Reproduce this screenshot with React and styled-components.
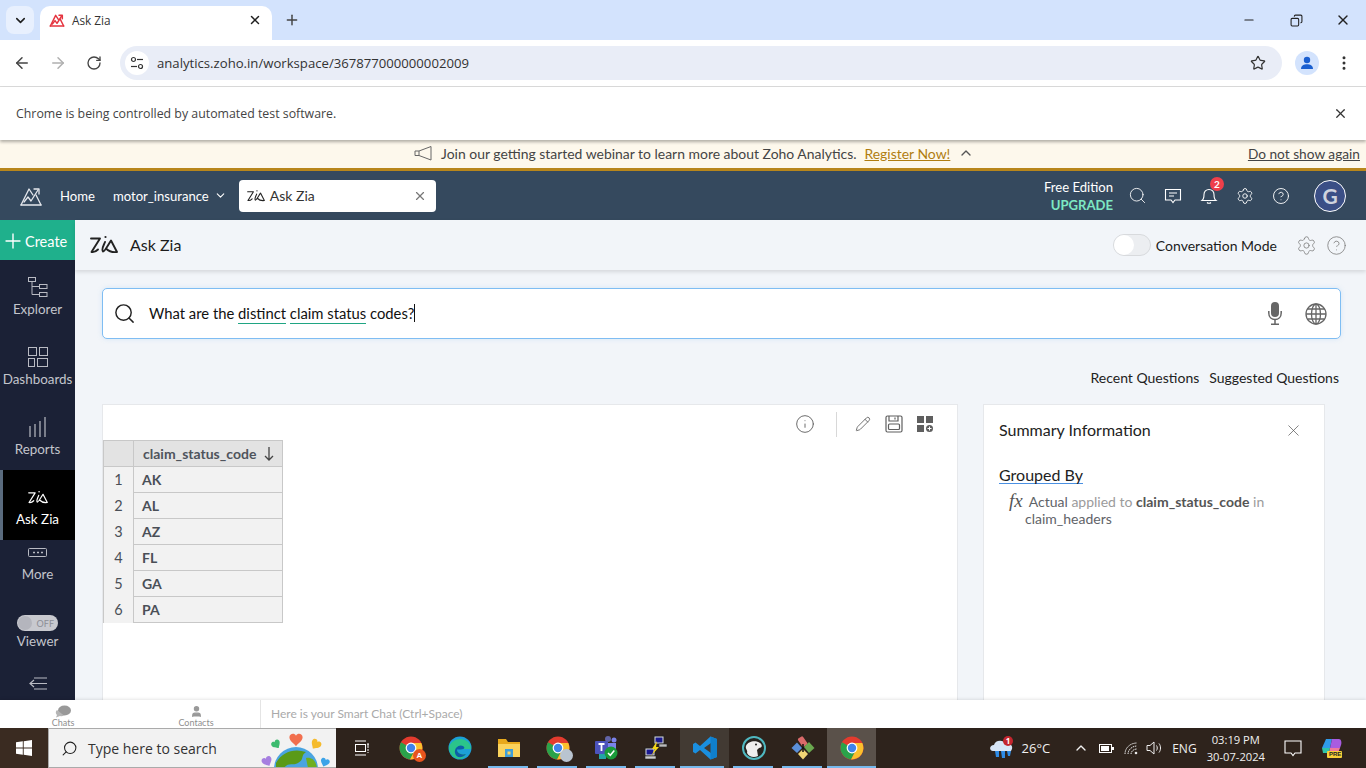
import React from 'react';
import styled, { createGlobalStyle } from 'styled-components';
import { ChevronDown, ChevronUp, X, Plus, ArrowLeft, ArrowRight, RotateCw, Star, MoreVertical, Search, Settings, CircleHelp, Info, Pencil, Minus, Copy, User } from 'lucide-react';

const GlobalStyle = createGlobalStyle`
  html, body { margin: 0; padding: 0; overflow: hidden; }
  * { box-sizing: border-box; }
  body { font-family: Lato, "Liberation Sans", sans-serif; }
`;

const Screen = styled.div`
  width: 1366px;
  height: 768px;
  display: flex;
  flex-direction: column;
  overflow: hidden;
  background: #fff;
`;

/* chrome */
const TabStrip = styled.div`
  height: 40px;
  flex: none;
  background: #d3e3fd;
  display: flex;
  align-items: flex-end;
  padding-left: 6px;
  color: #1f1f1f;
`;
const TabListBtn = styled.div`
  width: 28px;
  height: 28px;
  margin: 0 6px 6px 0;
  border-radius: 8px;
  background: #e8f0fe;
  display: flex;
  align-items: center;
  justify-content: center;
`;
const BrowserTab = styled.div`
  width: 232px;
  height: 34px;
  background: #fff;
  border-radius: 10px 10px 0 0;
  display: flex;
  align-items: center;
  padding: 0 10px 6px 9px;
  font: 11.8px "Open Sans", sans-serif;
  gap: 7px;
`;
const TabTitle = styled.span`
  flex: 1;
  color: #333;
`;
const NewTab = styled.div`
  width: 40px;
  height: 34px;
  padding-bottom: 6px;
  display: flex;
  align-items: center;
  justify-content: center;
  color: #444;
`;
const WindowBtns = styled.div`
  margin-left: auto;
  display: flex;
  height: 40px;
  align-items: center;
  gap: 33px;
  padding-right: 15px;
  color: #222;
`;
const RestoreIcon = styled(Copy)`
  transform: translateX(1px) scaleX(-1);
`;
const Toolbar = styled.div`
  height: 47px;
  flex: none;
  background: #fff;
  border-bottom: 1px solid #dcdcdc;
  display: flex;
  align-items: center;
  padding: 0 11px 1px 13px;
  color: #444;
`;
const NavIcons = styled.div`
  display: flex;
  gap: 18px;
  align-items: center;
  width: 107px;
`;
const ReloadIcon = styled(RotateCw)`
  margin-left: 1px;
`;
const Omnibox = styled.div`
  width: 1162px;
  height: 34px;
  border-radius: 17px;
  background: #e9edf7;
  display: flex;
  align-items: center;
  padding: 0 16px 0 5px;
  font: 13.15px "Open Sans", sans-serif;
  color: #333;
`;
const SiteBadge = styled.div`
  width: 24px;
  height: 24px;
  border-radius: 50%;
  background: #fff;
  display: flex;
  align-items: center;
  justify-content: center;
  margin-right: 8px;
`;
const UrlText = styled.span`
  flex: 1;
`;
const ProfileDot = styled.div`
  width: 24px;
  height: 24px;
  margin-left: 13px;
  border-radius: 50%;
  background: #d3e3fd;
  display: flex;
  align-items: center;
  justify-content: center;
`;
const MenuDots = styled.div`
  margin-left: 16px;
  display: flex;
  color: #333;
`;
const InfoBar = styled.div`
  height: 53px;
  flex: none;
  background: #fff;
  display: flex;
  align-items: center;
  justify-content: space-between;
  padding: 0 18px 0 16px;
  font: 12.35px "Open Sans", sans-serif;
  color: #444;
  box-shadow: 0 2px 3px rgba(0,0,0,.3);
  position: relative;
  z-index: 3;
`;

/* banner + nav */
const Banner = styled.div`
  height: 31px;
  flex: none;
  background: #fdf8ec;
  border-bottom: 3px solid #b8861b;
  display: flex;
  align-items: center;
  font-size: 13.95px;
  color: #444;
  padding: 0 6px 2px 414px;
`;
const BannerText = styled.span`
  margin-left: 8px;
`;
const RegisterLink = styled.a`
  margin: 0 8px 0 8px;
  color: #b07d10;
  text-decoration: underline;
`;
const DismissLink = styled.a`
  margin-left: auto;
  color: #444;
  text-decoration: underline;
  font-size: 13.7px;
`;
const TopNav = styled.div`
  height: 49px;
  flex: none;
  background: #35495e;
  display: flex;
  align-items: center;
  padding: 0 20px 0 19px;
  color: #fff;
  font-size: 13.1px;
`;
const NavLink = styled.span`
  margin-left: ${p => p.$ml || 0}px;
  display: flex;
  align-items: center;
  gap: 5px;
`;
const OpenTab = styled.div`
  margin-left: 12px;
  width: 197px;
  height: 32px;
  background: #fff;
  border-radius: 4px;
  color: #333;
  font-size: 14px;
  display: flex;
  align-items: center;
  padding: 0 9px 0 8px;
  gap: 5px;
`;
const OpenTabTitle = styled.span`
  flex: 1;
`;
const NavRight = styled.div`
  margin-left: auto;
  display: flex;
  align-items: center;
`;
const Edition = styled.div`
  text-align: right;
  line-height: 18px;
  font-size: 13.1px;
  margin-right: 6px;
`;
const Upgrade = styled.div`
  color: #7de8c3;
  font-weight: 700;
`;
const NavIcon = styled.div`
  width: 36px;
  height: 24px;
  display: flex;
  align-items: center;
  justify-content: center;
  position: relative;
  color: #fff;
`;
const NotifBadge = styled.span`
  position: absolute;
  top: -7px;
  left: 19px;
  width: 14px;
  height: 14px;
  border-radius: 50%;
  background: #ef3f4a;
  font-size: 10px;
  font-weight: 700;
  line-height: 14px;
  text-align: center;
`;
const Avatar = styled.div`
  width: 32px;
  height: 32px;
  margin-left: 15px;
  border-radius: 50%;
  background: #3b4f86;
  border: 1px solid #fff;
  color: #cfd3de;
  font-size: 21px;
  font-weight: 700;
  display: flex;
  align-items: center;
  justify-content: center;
`;

/* body */
const Body = styled.div`
  flex: 1;
  min-height: 0;
  display: flex;
  background: #f2f5f9;
`;
const Sidebar = styled.div`
  width: 75px;
  flex: none;
  background: #1b2136;
  display: flex;
  flex-direction: column;
  color: #c3c5cc;
  font-size: 13.4px;
`;
const CreateBtn = styled.div`
  height: 40px;
  background: #1fb08c;
  color: #fff;
  display: flex;
  align-items: center;
  padding: 2px 0 0 1px;
  font-size: 14.5px;
`;
const SideItem = styled.div`
  height: ${p => p.$h || 70}px;
  display: flex;
  flex-direction: column;
  align-items: center;
  padding-top: ${p => p.$pt ?? 17}px;
  gap: ${p => p.$gap ?? 3}px;
  background: ${p => (p.$active ? '#000' : 'transparent')};
  color: ${p => (p.$active ? '#fff' : 'inherit')};
  box-shadow: ${p => (p.$active ? 'inset 3px 0 0 #5a6b7e' : 'none')};
  white-space: nowrap;
`;
const ViewerToggle = styled.div`
  width: 41px;
  height: 16px;
  border-radius: 8px;
  background: #c8c9cf;
  display: flex;
  align-items: center;
  justify-content: space-between;
  padding: 0 4px 0 1px;
  font-size: 9px;
  color: #8c8e96;
`;
const ViewerKnob = styled.span`
  width: 14px;
  height: 14px;
  border-radius: 50%;
  background: #b4b5bd;
`;
const Content = styled.div`
  flex: 1;
  min-width: 0;
  display: flex;
  flex-direction: column;
`;
const PageHeader = styled.div`
  height: 50px;
  flex: none;
  background: #f2f5f9;
  box-shadow: 0 2px 4px rgba(0,0,0,.12);
  display: flex;
  align-items: center;
  padding: 0 20px 0 15px;
  color: #1c1c1c;
`;
const PageTitle = styled.span`
  margin-left: 12px;
  padding-bottom: 2px;
  font-size: 16px;
`;
const ModeToggle = styled.div`
  margin-left: auto;
  width: 38px;
  height: 22px;
  border-radius: 11px;
  background: #eceef1;
  border: 1px solid #d8dadd;
  display: flex;
  align-items: center;
`;
const ModeKnob = styled.span`
  width: 20px;
  height: 20px;
  border-radius: 50%;
  background: #fff;
`;
const ModeLabel = styled.span`
  margin: 0 19px 0 5px;
  font-size: 14px;
`;
const HeaderIcons = styled.div`
  display: flex;
  gap: 9px;
  color: #7f7f7f;
  margin-right: -1px;
`;
const Workspace = styled.div`
  flex: 1;
  min-height: 0;
  padding: 18px 25px 0 27px;
  display: flex;
  flex-direction: column;
`;
const SearchBox = styled.div`
  height: 51px;
  flex: none;
  background: #fff;
  border: 1px solid #7fbdf3;
  border-radius: 5px;
  box-shadow: 0 0 5px rgba(127,189,243,.25);
  display: flex;
  align-items: center;
  padding: 0 13px 0 10px;
  color: #111;
`;
const Query = styled.div`
  margin-left: 13px;
  flex: 1;
  font-size: 14.8px;
  white-space: pre;
`;
const Keyword = styled.span`
  display: inline-block;
  border-bottom: 1px solid #1fa583;
  line-height: 20px;
`;
const Caret = styled.span`
  display: inline-block;
  vertical-align: -3px;
  width: 1px;
  height: 18px;
  background: #111;
`;
const SearchActions = styled.div`
  display: flex;
  gap: 23px;
  align-items: center;
`;
const QuestionLinks = styled.div`
  height: 65px;
  flex: none;
  display: flex;
  justify-content: flex-end;
  gap: 10px;
  padding: 30px 2px 0 0;
  font-size: 14px;
  color: #222;
`;
const Cards = styled.div`
  flex: 1;
  min-height: 0;
  display: flex;
  gap: 25px;
  padding-right: 16px;
`;
const ResultCard = styled.div`
  width: 856px;
  background: #fff;
  border: 1px solid #e6e8eb;
  border-bottom: 0;
`;
const ResultTools = styled.div`
  height: 35px;
  display: flex;
  align-items: center;
  justify-content: flex-end;
  padding: 3px 24px 0 0;
  gap: 14px;
  color: #5f5f5f;
`;
const ToolDivider = styled.span`
  width: 1px;
  height: 25px;
  background: #d8d8d8;
  margin: 0 4px 0 7px;
`;
const DataTable = styled.table`
  border-collapse: collapse;
  width: 180px;
  table-layout: fixed;
  color: #4a4f57;
  font-size: 14px;
`;
const IndexCol = styled.col`
  width: 30px;
`;
const Th = styled.th`
  height: 26px;
  padding: 0 8px 0 9px;
  background: #e3e3e3;
  border: 1px solid #c8c8c8;
  border-left: ${p => (p.$dotted ? '1px dotted #bbb' : '1px solid #c8c8c8')};
  text-align: left;
  font-size: 14px;
  font-weight: 700;
  color: #4f545c;
`;
const ThInner = styled.span`
  display: flex;
  align-items: center;
  justify-content: space-between;
`;
const Td = styled.td`
  height: 26px;
  padding: 0 0 0 8px;
  background: #f2f2f2;
  border: 1px solid #c8c8c8;
  font-weight: 700;
`;
const IndexTd = styled.td`
  height: 26px;
  background: #f2f2f2;
  border: 1px solid #c8c8c8;
  border-right: 1px dotted #bbb;
  border-top: 0;
  border-bottom: 0;
  text-align: center;
  font-size: 14.5px;
`;
const SummaryCard = styled.div`
  width: 342px;
  background: #fff;
  border: 1px solid #e6e8eb;
  border-bottom: 0;
  padding: 15px 21px 0 15px;
`;
const SummaryHead = styled.div`
  display: flex;
  justify-content: space-between;
  align-items: center;
  font-size: 16px;
  color: #222;
  height: 20px;
`;
const SummaryTitle = styled.span`
  padding-bottom: 2px;
`;
const GroupedBy = styled.div`
  display: inline-block;
  margin-top: 26px;
  font-size: 16px;
  color: #222;
  line-height: 17px;
  border-bottom: 1px solid #4a90e2;
`;
const GroupedText = styled.div`
  margin: 9px 0 0 26px;
  text-indent: -16px;
  font-size: 14px;
  line-height: 17px;
  color: #5f6368;
  width: 250px;
`;
const FxMark = styled.span`
  font: italic 19px/0 "Liberation Serif", serif;
  color: #555;
  margin-right: 6px;
`;
const Muted = styled.span`
  color: #9b9b9b;
`;
const Strong = styled.b`
  color: #555;
`;

/* chat bar */
const ChatBar = styled.div`
  height: 28px;
  flex: none;
  background: #fff;
  display: flex;
  box-shadow: 0 -1px 3px rgba(0,0,0,.1);
  position: relative;
  color: #8f8f8f;
  font-size: 9px;
`;
const ChatTab = styled.div`
  width: 130px;
  padding: 0 ${p => p.$pr || 0}px 1px ${p => p.$pl || 0}px;
  display: flex;
  flex-direction: column;
  align-items: center;
  justify-content: flex-end;
  line-height: 9px;
`;
const ChatInput = styled.div`
  flex: 1;
  border-left: 1px solid #e4e4e4;
  padding: 6px 0 0 10px;
  font-size: 12px;
  color: #aaa;
`;

/* taskbar */
const Taskbar = styled.div`
  height: 40px;
  flex: none;
  background: #2e231c;
  display: flex;
  align-items: center;
  color: #f0f0f0;
`;
const StartBtn = styled.div`
  width: 48px;
  height: 40px;
  display: flex;
  align-items: center;
  justify-content: center;
  background: #3a2b21;
`;
const TaskSearch = styled.div`
  width: 288px;
  height: 40px;
  margin-right: 1px;
  background: #f2f2f2;
  border: 1px solid #aaa;
  border-width: 1px 0 1px 1px;
  display: flex;
  align-items: center;
  padding-left: 12px;
  color: #333;
  font: 14px "Open Sans", sans-serif;
  gap: 10px;
  position: relative;
  overflow: hidden;
`;
const MirroredSearch = styled(Search)`
  transform: scaleX(-1);
`;
const SearchArt = styled.svg`
  position: absolute;
  right: 0;
  top: -1px;
`;
const TaskApps = styled.div`
  display: flex;
  height: 40px;
`;
const TaskApp = styled.div`
  width: 49px;
  height: 40px;
  display: flex;
  align-items: center;
  justify-content: center;
  position: relative;
  background: ${p => p.$bg || 'transparent'};
  &::after {
    content: '';
    display: ${p => (p.$bar ? 'block' : 'none')};
    position: absolute;
    bottom: 0;
    left: ${p => p.$barLeft ?? 4}px;
    width: ${p => p.$bar}px;
    height: 2px;
    background: #76b9ed;
  }
`;
const AppBadge = styled.span`
  position: absolute;
  left: 27px;
  top: 21px;
  width: 13px;
  height: 13px;
  border-radius: 50%;
  background: ${p => p.$color};
  color: #fff;
  font: 700 8px/13px "Liberation Sans", sans-serif;
  text-align: center;
`;
const Tray = styled.div`
  margin-left: auto;
  display: flex;
  align-items: center;
  height: 40px;
  font: 12.5px "Open Sans", sans-serif;
  padding-right: 23px;
`;
const TrayItem = styled.div`
  margin-left: ${p => p.$ml || 0}px;
  display: flex;
  align-items: center;
  font-size: ${p => p.$fs || 12.5}px;
`;
const Clock = styled.div`
  margin-left: 10px;
  text-align: center;
  line-height: 17px;
  font-size: 11.2px;
`;

/* drawings */
const AnalyticsLogo = ({ color = '#e6e9ee', size = 24, sw = 1.3 }) => (
  <svg width={size} height={size} viewBox="0 0 24 24" fill="none" stroke={color} strokeWidth={sw} strokeLinejoin="round" strokeLinecap="round">
    <path d="M2 21 L10 5 L14 11" />
    <path d="M22 21 L17 11" />
    <path d="M2 21 H22" />
    <path d="M5 18 L9 13 L12 17 L19 6" />
    <path d="M15 5 H20 V10" />
  </svg>
);
const ZiaLogo = ({ color = '#222', w = 28, h = 20, sw = 1.9 }) => (
  <svg width={w} height={h} viewBox="0 0 28 20" fill="none" stroke={color} strokeWidth={sw} strokeLinecap="round" strokeLinejoin="round">
    <path d="M1 3.500 H10 L1.500 17 C4 17.500 6 16.500 8 14.500" />
    <path d="M15 7 C14 10 11 14 13 16.500 C14.500 17 18 10 21 5.500 L27 17 C23 17.500 19 16.500 16 13.500" />
    <circle cx="15.500" cy="2" r="1.100" fill={color} stroke="none" />
  </svg>
);
const ChromeIcon = ({ size = 22 }) => (
  <svg width={size} height={size} viewBox="0 0 24 24">
    <circle cx="12" cy="12" r="11.500" fill="#e33b2e" />
    <path d="M12 12 L2 6.300 A11.500 11.500 0 0 0 11 23.400 L17 12 Z" fill="#2aa24a" />
    <path d="M12 7 H22.300 A11.500 11.500 0 0 1 11 23.400 L17 12 Z" fill="#fbc02d" />
    <circle cx="12" cy="12" r="5.400" fill="#fff" />
    <circle cx="12" cy="12" r="4.200" fill="#3f83ea" />
  </svg>
);
const Sliders = () => (
  <svg width="14" height="14" viewBox="0 0 14 14" fill="none" stroke="#333" strokeWidth="1.200">
    <circle cx="3.500" cy="3.500" r="2" />
    <path d="M7 3.500 H13" />
    <circle cx="10.500" cy="10.500" r="2" />
    <path d="M1 10.500 H7" />
  </svg>
);
const ProfileIcon = () => (
  <svg width="14" height="14" viewBox="0 0 14 14" fill="#1a5fd0">
    <circle cx="7" cy="4" r="3.200" />
    <path d="M1 13 C1 9.500 4 8.300 7 8.300 C10 8.300 13 9.500 13 13 Z" />
  </svg>
);
const Megaphone = () => (
  <svg width="19" height="17" viewBox="0 0 19 17" fill="none" stroke="#666" strokeWidth="1">
    <path d="M1 6 H5 L17 1.500 V15 L5 10.500 H1 Z" />
    <path d="M5 6 V10.500" />
  </svg>
);
const ChatMsg = () => (
  <svg width="18" height="16" viewBox="0 0 18 16" fill="none" stroke="#fff" strokeWidth="1.100">
    <path d="M1.500 1.500 H16.500 V12 H11 L9 14.500 L7 12 H1.500 Z" />
    <path d="M5 5 H13 M5 8 H10" />
  </svg>
);
const Bell = () => (
  <svg width="18" height="18" viewBox="0 0 18 18" fill="none" stroke="#fff" strokeWidth="1.100">
    <path d="M2 13.500 C4 12 4 10 4 7.500 C4 4.500 6 2.500 9 2.500 C12 2.500 14 4.500 14 7.500 C14 10 14 12 16 13.500 Z" />
    <path d="M7 15.500 C8 16.500 10 16.500 11 15.500" />
  </svg>
);
const ExplorerIcon = () => (
  <svg width="20" height="21" viewBox="0 0 20 21" fill="none" stroke="#b9bbc3" strokeWidth="1">
    <rect x="0.500" y="0.500" width="7" height="4" />
    <rect x="11.500" y="7.500" width="7.500" height="4" />
    <rect x="11.500" y="15.500" width="7.500" height="4" />
    <path d="M4 5 V17.500 H11.500 M4 9.500 H11.500" />
  </svg>
);
const DashIcon = () => (
  <svg width="20" height="20" viewBox="0 0 20 20" fill="none" stroke="#b9bbc3" strokeWidth="1">
    <rect x="0.500" y="0.500" width="8" height="8" />
    <rect x="11.500" y="0.500" width="8" height="8" />
    <rect x="0.500" y="11.500" width="6" height="8" />
    <rect x="9.500" y="11.500" width="10" height="8" />
  </svg>
);
const ReportIcon = () => (
  <svg width="17" height="21" viewBox="0 0 17 21" fill="none" stroke="#b9bbc3" strokeWidth="1.200">
    <path d="M1 20 V9 M6 20 V7 M11 20 V4 M16 20 V0" />
  </svg>
);
const MoreIcon = () => (
  <svg width="20" height="10" viewBox="0 0 20 10" fill="none" stroke="#b9bbc3">
    <rect x="0.500" y="0.500" width="18" height="8" rx="1" />
    <path d="M5 4.500 h2 M9 4.500 h2 M13 4.500 h2" strokeWidth="1.400" />
  </svg>
);
const CollapseIcon = () => (
  <svg width="18" height="13" viewBox="0 0 18 13" fill="none" stroke="#b9bbc3" strokeWidth="1.200">
    <path d="M5 1 H18 M1 6.500 H18 M5 12 H18 M5 3 L1 6.500 L5 10" />
  </svg>
);
const MicIcon = () => (
  <svg width="14" height="23" viewBox="0 0 14 23" fill="none" stroke="#666" strokeWidth="1.500">
    <rect x="3" y="0" width="8" height="15" rx="4" fill="#666" stroke="none" />
    <path d="M0.800 9 V11 C0.800 15 3.500 17.500 7 17.500 C10.500 17.500 13.200 15 13.200 11 V9" />
    <path d="M7 17.500 V22 M3 22.300 H11" />
  </svg>
);
const GlobeIcon = () => (
  <svg width="22" height="22" viewBox="0 0 22 22" fill="none" stroke="#666" strokeWidth="1.300">
    <circle cx="11" cy="11" r="10" />
    <ellipse cx="11" cy="11" rx="4.500" ry="10" />
    <path d="M11 1 V21 M1 11 H21 M2.500 6 H19.500 M2.500 16 H19.500" />
  </svg>
);
const SaveIcon = () => (
  <svg width="18" height="18" viewBox="0 0 18 18" fill="none" stroke="#5f5f5f" strokeWidth="1.200">
    <rect x="1" y="1" width="16" height="16" rx="1.500" />
    <path d="M4 1 V6 H13 V1 M10 2.500 V4.500" />
    <rect x="3.500" y="9" width="11" height="5.500" rx="1" />
  </svg>
);
const WidgetAdd = () => (
  <svg width="16" height="16" viewBox="0 0 16 16" fill="#5f5f5f">
    <rect x="0" y="0" width="7" height="7" />
    <rect x="9" y="0" width="7" height="7" />
    <rect x="0" y="9" width="7" height="7" />
    <circle cx="12.500" cy="12.500" r="3.500" />
    <path d="M12 10.500 h1 v1.500 h1.500 v1 h-1.500 v1.500 h-1 v-1.500 h-1.500 v-1 h1.500 z" fill="#fff" />
  </svg>
);
const SortArrow = () => (
  <svg width="10" height="14" viewBox="0 0 10 14" fill="none" stroke="#444" strokeWidth="1.300">
    <path d="M5 0 V13 M1 9 L5 13 L9 9" />
  </svg>
);
const ChatBubbles = () => (
  <svg width="16" height="13" viewBox="0 0 16 13" fill="#999">
    <ellipse cx="9.500" cy="5.500" rx="6.500" ry="5" />
    <path d="M2 5 C0 7 1 9 2 10 L1 12.500 L5 11 C7 11.500 8 11 9 10.500 Z" fill="#b5b5b5" />
  </svg>
);
const WinLogo = () => (
  <svg width="16" height="16" viewBox="0 0 16 16" fill="#fff">
    <path d="M0 2.200 L6.800 1.300 V7.500 H0 Z M7.700 1.200 L16 0 V7.500 H7.700 Z M0 8.500 H6.800 V14.700 L0 13.800 Z M7.700 8.500 H16 V16 L7.700 14.800 Z" />
  </svg>
);
const Heart = ({ x, y, s, color, r = 0 }) => (
  <path
    d="M0 -3 C1.500 -6 6 -5 6 -1.500 C6 2 2 4 0 6.500 C-2 4 -6 2 -6 -1.500 C-6 -5 -1.500 -6 0 -3 Z"
    fill={color}
    transform={`translate(${x} ${y}) rotate(${r}) scale(${s})`}
  />
);
const GlobeArt = () => (
  <SearchArt width="78" height="40" viewBox="0 0 78 40">
    <Heart x={38} y={11} s={1.100} color="#f26f4e" />
    <Heart x={18} y={16} s={0.750} color="#3dbb6f" r={-35} />
    <Heart x={58} y={16} s={0.850} color="#f5bb2e" r={35} />
    <Heart x={9} y={33} s={0.850} color="#a67fe0" r={-25} />
    <Heart x={67} y={34} s={0.750} color="#3ba3e8" r={20} />
    <circle cx="38" cy="41" r="22" fill="#4aa4e0" />
    <path d="M18 35 C24 24 36 20 48 24 C42 28 47 31 40 35 C35 38 30 34 26 40 H18 Z" fill="#5a9a18" />
    <path d="M48 30 C54 29 58 33 59 40 H50 Z" fill="#6fae20" />
  </SearchArt>
);
const TaskViewIcon = () => (
  <svg width="16" height="16" viewBox="0 0 16 16" fill="none" stroke="#fff">
    <path d="M1 1 H12 M1 15 H12" />
    <rect x="1.500" y="4.500" width="10" height="7" />
    <path d="M14 3 V13 M13 5 h2" strokeDasharray="2 1" />
  </svg>
);
const EdgeIcon = () => (
  <svg width="24" height="24" viewBox="0 0 24 24">
    <circle cx="12" cy="12" r="11.500" fill="#1c9fd8" />
    <path d="M1 12 C2 5 10 1 17 4 C22 6 23 11 23 13 H9 C9 16 12 19 18 18 C17 21 14 23 11 23 C5 22 1 17 1 12 Z" fill="#2bc48a" />
    <path d="M7 17 C6 11 12 8 15 10 C18 12 16 14 9 13.500 C9 17 13 19.500 18 18 C14 23 8 22 7 17 Z" fill="#0d5ea8" />
  </svg>
);
const FolderIcon = () => (
  <svg width="24" height="22" viewBox="0 0 24 22">
    <path d="M1 2 H9 L11 5 H23 V20 H1 Z" fill="#e8a91c" />
    <path d="M1 7 H23 V20 H1 Z" fill="#fbd35c" />
    <rect x="8" y="12" width="8" height="8" fill="#3f9ed8" />
    <rect x="10.500" y="14.500" width="3" height="3" fill="#fbd35c" />
  </svg>
);
const TeamsIcon = () => (
  <svg width="26" height="26" viewBox="0 0 26 26">
    <circle cx="14" cy="4" r="3" fill="#6264a7" />
    <circle cx="20" cy="5" r="2.500" fill="#7b83eb" />
    <rect x="1" y="6" width="13" height="13" rx="1" fill="#4b53bc" />
    <rect x="14" y="8" width="8" height="10" fill="#7b83eb" />
    <rect x="5" y="19" width="7" height="5" fill="#22a5a5" />
    <circle cx="17" cy="18" r="6.500" fill="#1a9a3a" />
    <path d="M14 18 L16.300 20.300 L20.300 15.500" stroke="#fff" strokeWidth="1.500" fill="none" />
    <path d="M4.500 9 H10.500 M7.500 9 V16" stroke="#fff" strokeWidth="1.800" />
  </svg>
);
const PuttyIcon = () => (
  <svg width="24" height="26" viewBox="0 0 24 26">
    <rect x="10" y="1" width="10" height="8" fill="#ddd" stroke="#222" />
    <rect x="11.500" y="2.500" width="7" height="5" fill="#1a1a90" />
    <rect x="15" y="9" width="8" height="3" fill="#bbb" stroke="#222" strokeWidth=".6" />
    <rect x="1" y="13" width="10" height="8" fill="#ddd" stroke="#222" />
    <rect x="2.500" y="14.500" width="7" height="5" fill="#1a1a90" />
    <rect x="1" y="21" width="11" height="3" fill="#ccc" stroke="#222" strokeWidth=".6" />
    <path d="M13 6 L8 14 L11 14 L7 21 L15 12 L12 12 Z" fill="#f5d617" />
  </svg>
);
const VsCode = () => (
  <svg width="24" height="24" viewBox="0 0 24 24">
    <path d="M17.500 0.500 L7 10 L2.500 6.500 L0 8 V16 L2.500 17.500 L7 14 L17.500 23.500 L24 21 V3 Z M18 7 V17 L11 12 Z" fill="#1a8fe0" fillRule="evenodd" />
    <path d="M17.500 0.500 L24 3 V21 L17.500 23.500 Z M18 7 V17 L17.500 17.200 V6.800 Z" fill="#0f7fcc" />
  </svg>
);
const DogIcon = () => (
  <svg width="24" height="24" viewBox="0 0 24 24">
    <circle cx="12" cy="12" r="11" fill="#26231f" stroke="#4fb8c0" strokeWidth="2" />
    <path d="M4 10 C6 5 14 4 18 7 C21 9 20 12 17 12 L15 14 L16 20 C12 22 7 21 5 17 C6 14 3 13 4 10 Z" fill="#eee" />
    <circle cx="14" cy="8.500" r="1" fill="#222" />
  </svg>
);
const GitKraken = () => (
  <svg width="24" height="24" viewBox="0 0 24 24">
    <rect x="9" y="0.500" width="6" height="10" rx="1.500" fill="#d96a6a" transform="rotate(-35 12 6)" />
    <path d="M13 11 L18 6 L23.500 12 L18 17 Z" fill="#6aa84f" />
    <path d="M12 13 L17 18 L12 23.500 L7 18 Z" fill="#f2d675" />
    <path d="M0.500 12 L6 6.500 L11 12 L6 17 Z" fill="#5b8fd9" />
    <path d="M12 8 V16" stroke="#111" strokeWidth="1.500" />
  </svg>
);
const Cloud = () => (
  <svg width="26" height="24" viewBox="0 0 26 24">
    <path d="M4 15 C0 15 0 9 5 9 C6 4 14 3 17 8 C22 7 25 11 22 15 Z" fill="#d7e6f7" />
    <path d="M6 15 H10 V21 H7 Z M12 15 H16 V22 H13 Z M18 15 H22 L21 20 H19 Z" fill="#2f8ce6" />
    <circle cx="19" cy="5" r="5" fill="#c4262e" />
  </svg>
);
const CloudBadge = styled.span`
  position: absolute;
  top: 0;
  left: 16px;
  width: 7px;
  font-size: 8px;
  font-weight: 700;
  text-align: center;
  color: #fff;
  line-height: 10px;
`;
const CloudWrap = styled.span`
  position: relative;
  display: flex;
`;
const BatteryIcon = () => (
  <svg width="15" height="9" viewBox="0 0 15 9">
    <rect x="0.500" y="0.500" width="12" height="8" fill="none" stroke="#fff" />
    <rect x="2" y="2" width="8" height="5" fill="#fff" />
    <rect x="13" y="3" width="2" height="3" fill="#fff" />
  </svg>
);
const WifiIcon = () => (
  <svg width="14" height="13" viewBox="0 0 14 13" fill="none" stroke="#e8e8e8" strokeWidth="1">
    <path d="M1 12 C1 6 6 1 13 1 M4 12 C4 8 8 4 13 4 M7 12 C7 10 9 7 13 7" strokeDasharray="1.500 .7" />
    <circle cx="12" cy="11" r="1.300" fill="#e8e8e8" stroke="none" />
  </svg>
);
const SpeakerIcon = () => (
  <svg width="17" height="14" viewBox="0 0 17 14" fill="none" stroke="#eee" strokeWidth="1">
    <path d="M1 4.500 H4 L8 1 V13 L4 9.500 H1 Z" />
    <path d="M10.500 4.500 C11.500 6 11.500 8 10.500 9.500 M13 2.500 C15 5 15 9 13 11.500" />
  </svg>
);
const NoticeIcon = () => (
  <svg width="18" height="17" viewBox="0 0 18 17" fill="none" stroke="#fff" strokeWidth="1.100">
    <path d="M1 1 H17 V13 H11 L9 15.500 L7 13 H1 Z" />
  </svg>
);
const CopilotIcon = () => (
  <svg width="22" height="22" viewBox="0 0 22 22">
    <path d="M5 2 H11 L9 11 H1 Z" fill="#2f9bea" />
    <path d="M11 2 H18 C20 2 21 5 20 8 L19 11 H9 Z" fill="#a85ce0" />
    <path d="M1 11 H9 L8 16 H2 Z" fill="#2ec4a8" />
    <path d="M9 11 H19 L17 16 H8 Z" fill="#f0789a" />
    <rect x="6" y="14" width="15" height="7" rx="1" fill="#f8d038" />
  </svg>
);
const ProBadge = styled.span`
  position: absolute;
  left: 8px;
  top: 14px;
  font: 700 6px "Liberation Sans", sans-serif;
  color: #222;
`;
const CopilotWrap = styled.span`
  position: relative;
  display: flex;
  margin-left: 19px;
`;

const rows = ['AK', 'AL', 'AZ', 'FL', 'GA', 'PA'];

const App = () => (
  <Screen>
    <GlobalStyle />
    <TabStrip>
      <TabListBtn><ChevronDown size={15} strokeWidth={2.5} /></TabListBtn>
      <BrowserTab>
        <AnalyticsLogo color="#e5343f" size={16} sw={2.2} />
        <TabTitle>Ask Zia</TabTitle>
        <X size={14} strokeWidth={2.5} />
      </BrowserTab>
      <NewTab><Plus size={16} strokeWidth={2.2} /></NewTab>
      <WindowBtns>
        <Minus size={14} />
        <RestoreIcon size={13} />
        <X size={16} />
      </WindowBtns>
    </TabStrip>
    <Toolbar>
      <NavIcons>
        <ArrowLeft size={18} />
        <ArrowRight size={18} color="#b0b0b0" />
        <ReloadIcon size={16} />
      </NavIcons>
      <Omnibox>
        <SiteBadge><Sliders /></SiteBadge>
        <UrlText>analytics.zoho.in/workspace/367877000000002009</UrlText>
        <Star size={16} strokeWidth={1.8} />
      </Omnibox>
      <ProfileDot><ProfileIcon /></ProfileDot>
      <MenuDots><MoreVertical size={18} /></MenuDots>
    </Toolbar>
    <InfoBar>
      <span>Chrome is being controlled by automated test software.</span>
      <X size={15} color="#333" strokeWidth={2} />
    </InfoBar>
    <Banner>
      <Megaphone />
      <BannerText>Join our getting started webinar to learn more about Zoho Analytics.</BannerText>
      <RegisterLink>Register Now!</RegisterLink>
      <ChevronUp size={16} color="#555" />
      <DismissLink>Do not show again</DismissLink>
    </Banner>
    <TopNav>
      <AnalyticsLogo />
      <NavLink $ml={17}>Home</NavLink>
      <NavLink $ml={18}>motor_insurance <ChevronDown size={13} /></NavLink>
      <OpenTab>
        <ZiaLogo w={18} h={14} sw={1.700} />
        <OpenTabTitle>Ask Zia</OpenTabTitle>
        <X size={14} color="#777" />
      </OpenTab>
      <NavRight>
        <Edition>
          Free Edition
          <Upgrade>UPGRADE</Upgrade>
        </Edition>
        <NavIcon><Search size={19} strokeWidth={1.1} /></NavIcon>
        <NavIcon><ChatMsg /></NavIcon>
        <NavIcon><Bell /><NotifBadge>2</NotifBadge></NavIcon>
        <NavIcon><Settings size={18} strokeWidth={1.2} /></NavIcon>
        <NavIcon><CircleHelp size={18} strokeWidth={1.2} /></NavIcon>
        <Avatar>G</Avatar>
      </NavRight>
    </TopNav>
    <Body>
      <Sidebar>
        <CreateBtn><Plus size={24} strokeWidth={1.4} />Create</CreateBtn>
        <SideItem><ExplorerIcon />Explorer</SideItem>
        <SideItem $gap={4}><DashIcon />Dashboards</SideItem>
        <SideItem><ReportIcon />Reports</SideItem>
        <SideItem $active $pt={20} $gap={6}><ZiaLogo color="#fff" w={20} h={15} sw={1.700} />Ask Zia</SideItem>
        <SideItem $h={60} $pt={8} $gap={8}><MoreIcon />More</SideItem>
        <SideItem $h={60} $pt={15} $gap={2}>
          <ViewerToggle><ViewerKnob />OFF</ViewerToggle>
          Viewer
        </SideItem>
        <SideItem $h={40} $pt={17}><CollapseIcon /></SideItem>
      </Sidebar>
      <Content>
        <PageHeader>
          <ZiaLogo w={28} h={20} />
          <PageTitle>Ask Zia</PageTitle>
          <ModeToggle><ModeKnob /></ModeToggle>
          <ModeLabel>Conversation Mode</ModeLabel>
          <HeaderIcons>
            <Settings size={21} strokeWidth={0.95} />
            <CircleHelp size={21} strokeWidth={0.95} />
          </HeaderIcons>
        </PageHeader>
        <Workspace>
          <SearchBox>
            <Search size={23} strokeWidth={1.5} color="#222" />
            <Query>
              What are the <Keyword>distinct</Keyword> <Keyword>claim status</Keyword> codes?<Caret />
            </Query>
            <SearchActions>
              <MicIcon />
              <GlobeIcon />
            </SearchActions>
          </SearchBox>
          <QuestionLinks>
            <span>Recent Questions</span>
            <span>Suggested Questions</span>
          </QuestionLinks>
          <Cards>
            <ResultCard>
              <ResultTools>
                <Info size={20} strokeWidth={1.1} />
                <ToolDivider />
                <Pencil size={16} strokeWidth={1.3} />
                <SaveIcon />
                <WidgetAdd />
              </ResultTools>
              <DataTable>
                <colgroup>
                  <IndexCol />
                  <col />
                </colgroup>
                <thead>
                  <tr>
                    <Th />
                    <Th $dotted>
                      <ThInner>claim_status_code <SortArrow /></ThInner>
                    </Th>
                  </tr>
                </thead>
                <tbody>
                  {rows.map((code, i) => (
                    <tr key={code}>
                      <IndexTd>{i + 1}</IndexTd>
                      <Td>{code}</Td>
                    </tr>
                  ))}
                </tbody>
              </DataTable>
            </ResultCard>
            <SummaryCard>
              <SummaryHead>
                <SummaryTitle>Summary Information</SummaryTitle>
                <X size={19} strokeWidth={0.9} color="#555" />
              </SummaryHead>
              <GroupedBy>Grouped By</GroupedBy>
              <GroupedText>
                <FxMark>fx</FxMark>Actual <Muted>applied to</Muted> <Strong>claim_status_code</Strong> <Muted>in</Muted> claim_headers
              </GroupedText>
            </SummaryCard>
          </Cards>
        </Workspace>
      </Content>
    </Body>
    <ChatBar>
      <ChatTab $pr={4}><ChatBubbles />Chats</ChatTab>
      <ChatTab $pl={2}><User size={13} fill="#999" color="#999" />Contacts</ChatTab>
      <ChatInput>Here is your Smart Chat (Ctrl+Space)</ChatInput>
    </ChatBar>
    <Taskbar>
      <StartBtn><WinLogo /></StartBtn>
      <TaskSearch>
        <MirroredSearch size={17} strokeWidth={1.5} color="#222" />
        Type here to search
        <GlobeArt />
      </TaskSearch>
      <TaskApps>
        <TaskApp><TaskViewIcon /></TaskApp>
        <TaskApp><ChromeIcon size={24} /><AppBadge $color="#e8541e">A</AppBadge></TaskApp>
        <TaskApp><EdgeIcon /></TaskApp>
        <TaskApp $bar={40}><FolderIcon /></TaskApp>
        <TaskApp $bar={40}><ChromeIcon size={24} /><AppBadge $color="#b9c4d0" /></TaskApp>
        <TaskApp $bar={40}><TeamsIcon /></TaskApp>
        <TaskApp $bar={40}><PuttyIcon /></TaskApp>
        <TaskApp $bar={44} $barLeft={0} $bg="#423a33"><VsCode /></TaskApp>
        <TaskApp $bar={40}><DogIcon /></TaskApp>
        <TaskApp $bar={40}><GitKraken /></TaskApp>
        <TaskApp $bar={49} $barLeft={0} $bg="#5a514a"><ChromeIcon size={24} /></TaskApp>
      </TaskApps>
      <Tray>
        <CloudWrap><Cloud /><CloudBadge>1</CloudBadge></CloudWrap>
        <TrayItem $ml={7} $fs={13}>26°C</TrayItem>
        <TrayItem $ml={23}><ChevronUp size={16} /></TrayItem>
        <TrayItem $ml={10}><BatteryIcon /></TrayItem>
        <TrayItem $ml={10}><WifiIcon /></TrayItem>
        <TrayItem $ml={8}><SpeakerIcon /></TrayItem>
        <TrayItem $ml={9} $fs={12}>ENG</TrayItem>
        <Clock>03:19 PM<br />30-07-2024</Clock>
        <TrayItem $ml={19}><NoticeIcon /></TrayItem>
        <CopilotWrap><CopilotIcon /><ProBadge>PRE</ProBadge></CopilotWrap>
      </Tray>
    </Taskbar>
  </Screen>
);

export default App;
